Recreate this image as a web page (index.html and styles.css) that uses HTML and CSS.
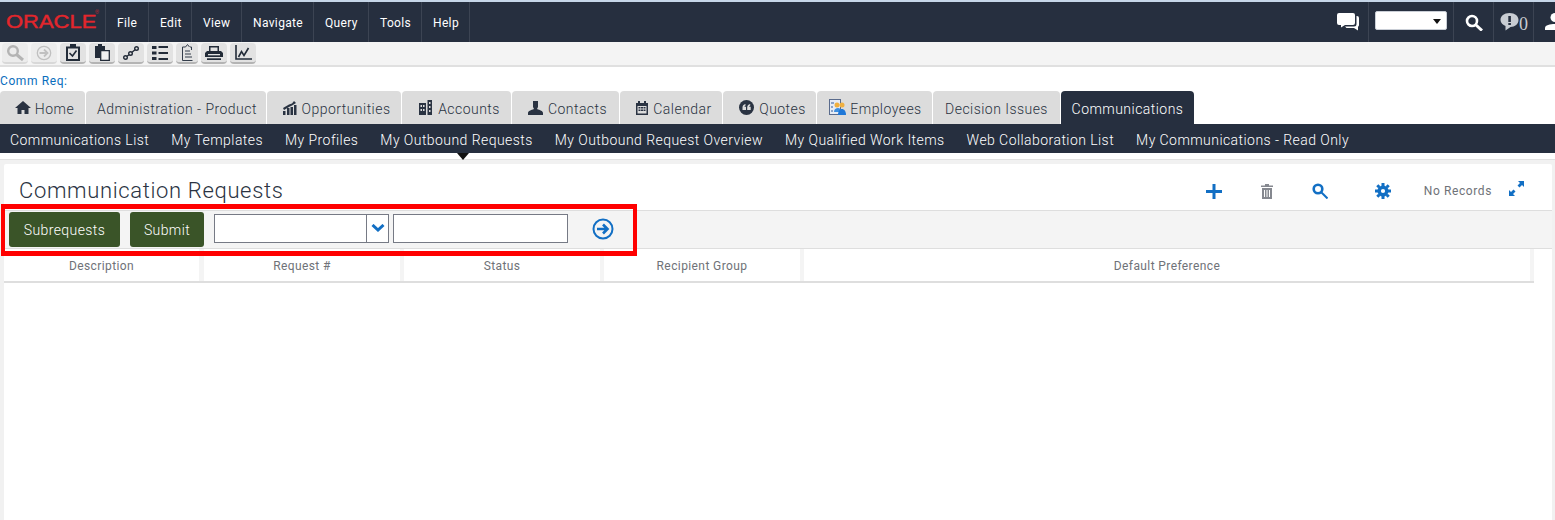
FILE: index.html
```html
<!DOCTYPE html>
<html lang="en">
<head>
<meta charset="utf-8">
<title>Communication Requests</title>
<link rel="stylesheet" href="styles.css">
</head>
<body>
<header class="topbar">
  <div class="logo"><span class="logo-text">ORACLE</span><span class="reg">®</span></div>
  <nav class="menu">
    <span class="menu-item">File</span><span class="menu-item">Edit</span><span class="menu-item">View</span><span class="menu-item">Navigate</span><span class="menu-item">Query</span><span class="menu-item">Tools</span><span class="menu-item">Help</span>
  </nav>
  <div class="top-right">
    <span class="tr-cell tr-chat"><svg width="23" height="18" viewBox="0 0 23 18"><path fill="#fff" d="M2 0h14a2 2 0 0 1 2 2v8a2 2 0 0 1-2 2H8l-4 2.500V12H2a2 2 0 0 1-2-2V2a2 2 0 0 1 2-2z"/><path fill="#fff" d="M19.500 3H20a2 2 0 0 1 2 2v7a2 2 0 0 1-1 1.800V17.500L17 15H9.500l-1.500-1.500h9a2.500 2.500 0 0 0 2.500-2.500z"/></svg></span>
    <span class="tr-cell tr-select"><span class="mini-select"><i class="caret"></i></span></span>
    <span class="tr-cell tr-search"><svg width="18" height="17" viewBox="0 0 18 17"><circle cx="7" cy="7" r="5" fill="none" stroke="#fff" stroke-width="2.600"/><path d="M11 11l6 5.500" stroke="#fff" stroke-width="3"/></svg></span>
    <span class="tr-cell tr-alert"><svg width="19" height="18" viewBox="0 0 19 18"><path fill="#c8ccd2" d="M9.500 0c5.500 0 9 3 9 7s-3.500 7-8 7l-5 3.500V13C3 12 .5 10 .5 7c0-4 3.500-7 9-7z"/><rect x="8.300" y="3" width="2.600" height="6" fill="#262f3f"/><rect x="8.300" y="10" width="2.600" height="2" fill="#262f3f"/></svg><span class="alert-count">0</span></span>
    <span class="tr-cell tr-user"><svg width="20" height="18" viewBox="0 0 20 18"><circle cx="10" cy="4.500" r="4.500" fill="#fff"/><path fill="#fff" d="M0 15c0-3 5-4 10-4s10 1 10 4v2H0z"/></svg></span>
  </div>
</header>

<div class="toolbar">
  <span class="tool disabled"><svg width="18" height="18" viewBox="0 0 18 18"><circle cx="7" cy="7" r="4.800" fill="none" stroke="#b4b4b4" stroke-width="2.400"/><path d="M10.500 10.500l6.500 5.500" stroke="#b4b4b4" stroke-width="3"/></svg></span>
  <span class="tool disabled"><svg width="16" height="16" viewBox="0 0 16 16"><circle cx="8" cy="8" r="6.700" fill="none" stroke="#c0c0c0" stroke-width="1.300"/><path d="M3.500 8h7M8 4.500L11.500 8 8 11.500" fill="none" stroke="#c0c0c0" stroke-width="1.800"/></svg></span>
  <span class="tool"><svg width="14" height="17" viewBox="0 0 14 17"><path d="M1 3.500h12v12.500H1z" fill="none" stroke="#222b38" stroke-width="2"/><rect x="4" y="0" width="6" height="4" fill="#222b38"/><path d="M3.500 9l3 3 4-5.500" fill="none" stroke="#222b38" stroke-width="1.600"/></svg></span>
  <span class="tool"><svg width="15" height="17" viewBox="0 0 15 17"><path d="M0 2h10v12H0z" fill="#222b38"/><rect x="3" y="0" width="4" height="3" fill="#222b38"/><path d="M5.700 6.700h8.600v9.600H5.700z" fill="#f0f0f0" stroke="#222b38" stroke-width="1.300"/></svg></span>
  <span class="tool"><svg width="16" height="14" viewBox="0 0 16 14"><g fill="none" stroke="#222b38" stroke-width="1.400"><circle cx="2.500" cy="11.500" r="1.800"/><circle cx="7.500" cy="7.500" r="1.800"/><circle cx="13.500" cy="2.500" r="1.800"/><path d="M4 10.200L6 8.800M9 6.200L12 3.800"/></g></svg></span>
  <span class="tool"><svg width="16" height="14" viewBox="0 0 16 14" fill="#222b38"><rect width="4.500" height="3"/><rect x="6.500" width="9.500" height="2"/><rect y="5.500" width="4.500" height="3"/><rect x="6.500" y="6" width="9.500" height="2"/><rect y="11" width="4.500" height="3"/><rect x="6.500" y="12" width="9.500" height="2"/></svg></span>
  <span class="tool tool-narrow"><svg width="11" height="17" viewBox="0 0 11 17" fill="none" stroke="#333c4a"><path d="M.5 16.500V3h3M.5 16.500h10"/><path d="M3.500 3l2-2.500 2 2.500"/><path d="M8 3h1.500v3M3 7h5M3 10h6M3 13h7"/></svg></span>
  <span class="tool"><svg width="18" height="14" viewBox="0 0 18 14" fill="#222b38"><path d="M4 0h10v1.500H5.500V5h-1.500zM12.500 0H14v5h-1.500z"/><path d="M2 5h14l2 2v4H0V7z"/><rect x="3" y="8" width="12" height="1.300" fill="#e4e4e4"/><rect x="2" y="12.300" width="14" height="1.700"/></svg></span>
  <span class="tool"><svg width="17" height="15" viewBox="0 0 17 15" fill="none" stroke="#222b38" stroke-width="1.600"><path d="M1 0v14h16"/><path d="M3.500 12l3-5.500 2.500 4L13.500 3"/></svg></span>
</div>

<div class="context"><a class="context-link">Comm Req:</a></div>

<nav class="tabs">
  <span class="tab tab-home"><svg class="tab-icon" width="16" height="13" viewBox="0 0 16 13" fill="#2a3342"><path d="M8 0L0 7h2.500v6h4V9h3v4h4V7H16z"/></svg>Home</span>
  <span class="tab tab-admin">Administration - Product</span>
  <span class="tab tab-opp"><svg class="tab-icon" width="14" height="14" viewBox="0 0 14 14" fill="#2a3342"><rect y="10" width="2.500" height="4"/><rect x="4" y="7" width="2.500" height="7"/><rect x="7.500" y="6" width="2.500" height="8"/><rect x="11" y="4" width="2.500" height="10"/><path d="M0 7l6-3.500 3-1L11 0l2 2-4 2.500-3 1.500-5 3z"/></svg>Opportunities</span>
  <span class="tab tab-acc"><svg class="tab-icon" width="13" height="15" viewBox="0 0 13 15" fill="#2a3342"><path d="M0 3h7v12H0zM8.500 0H13v15H8.500z"/><g fill="#dcdcdc"><rect x="1.500" y="5" width="1.500" height="2"/><rect x="4" y="5" width="1.500" height="2"/><rect x="1.500" y="9" width="1.500" height="2"/><rect x="4" y="9" width="1.500" height="2"/><rect x="10" y="2" width="1.500" height="2"/><rect x="10" y="6" width="1.500" height="2"/><rect x="10" y="10" width="1.500" height="2"/></g></svg>Accounts</span>
  <span class="tab tab-con"><svg class="tab-icon" width="15" height="14" viewBox="0 0 15 14" fill="#2a3342"><path d="M5 0h5v6l-1 2c3 1 6 2 6 4v2H0v-2c0-2 3-3 6-4L5 6z"/></svg>Contacts</span>
  <span class="tab tab-cal"><svg class="tab-icon" width="12" height="14" viewBox="0 0 12 14"><path fill="#2a3342" d="M0 2h2V0h2v2h4V0h2v2h2v12H0z"/><rect x="1.500" y="5" width="9" height="7.500" fill="#dcdcdc"/><g fill="#2a3342"><rect x="2.500" y="6" width="2" height="1.500"/><rect x="5" y="6" width="2" height="1.500"/><rect x="7.500" y="6" width="2" height="1.500"/><rect x="2.500" y="8.500" width="2" height="1.500"/><rect x="5" y="8.500" width="2" height="1.500"/><rect x="7.500" y="8.500" width="2" height="1.500"/></g></svg>Calendar</span>
  <span class="tab tab-quo"><svg class="tab-icon" width="15" height="15" viewBox="0 0 15 15"><circle cx="7.500" cy="7.500" r="7.500" fill="#2a3342"/><path fill="#dcdcdc" d="M3.500 10V7.500c0-2 1-3 3-3.500v1.500c-.7.300-1 .7-1 1.200H7V10zM8.200 10V7.500c0-2 1-3 3-3.500v1.500c-.7.300-1 .7-1 1.200h1.500V10z"/></svg>Quotes</span>
  <span class="tab tab-emp"><svg class="tab-icon" width="17" height="17" viewBox="0 0 17 17"><rect x=".5" y=".5" width="11" height="15" fill="#e6ecf5" stroke="#5a6b8c"/><path d="M2 3h3v2H2zM2 7h2v2H2zM2 11h2v2H2z" fill="#8aa3c8"/><circle cx="8" cy="6" r="2.500" fill="#f0b040"/><circle cx="13" cy="6" r="2.500" fill="#f0b040"/><path d="M5 13c0-3 2-4 4-4s3 1 3 4z" fill="#3d8fe0"/><path d="M9 16c0-4 2-6 4-6s4 2 4 6z" fill="#1f78d8"/></svg>Employees</span>
  <span class="tab tab-dec">Decision Issues</span>
  <span class="tab tab-active">Communications</span>
</nav>

<nav class="subnav">
  <span class="sub-item">Communications List</span><span class="sub-item">My Templates</span><span class="sub-item">My Profiles</span><span class="sub-item sub-current">My Outbound Requests</span><span class="sub-item">My Outbound Request Overview</span><span class="sub-item">My Qualified Work Items</span><span class="sub-item">Web Collaboration List</span><span class="sub-item">My Communications - Read Only</span>
</nav>

<main class="content">
  <section class="panel">
    <div class="panel-head">
      <h1 class="panel-title">Communication Requests</h1>
      <div class="panel-actions">
        <svg class="act act-add" width="16" height="15" viewBox="0 0 16 15"><path fill="#126fc4" d="M6.500 0h3v6H16v3H9.500v6h-3V9H0V6h6.500z"/></svg>
        <svg class="act act-del" width="12" height="15" viewBox="0 0 12 15" fill="#85888f"><path d="M4 0h4v1.500h4V3H0V1.500h4z"/><path d="M1 4h10v11H1zM3 6v7h1V6zm2.500 0v7h1V6zM8 6v7h1V6z" fill-rule="evenodd"/></svg>
        <svg class="act act-find" width="16" height="16" viewBox="0 0 16 16"><circle cx="6" cy="6" r="4.300" fill="none" stroke="#126fc4" stroke-width="2.600"/><path d="M9.500 9.500l6 6" stroke="#126fc4" stroke-width="2"/></svg>
        <svg class="act act-gear" width="16" height="16" viewBox="0 0 16 16"><circle cx="8" cy="8" r="3.800" fill="none" stroke="#126fc4" stroke-width="3.400"/><g stroke="#126fc4" stroke-width="3"><path d="M8 0v3M8 13v3M0 8h3M13 8h3M2.300 2.300l2 2M11.700 11.700l2 2M13.700 2.300l-2 2M4.300 11.700l-2 2"/></g></svg>
        <span class="records">No Records</span>
        <svg class="act act-expand" width="15" height="15" viewBox="0 0 15 15" fill="#126fc4"><path d="M9 0h6v6l-2-2-2.500 2.500-2-2L11 2zM0 9l2 2 2.500-2.500 2 2L4 13l2 2H0z"/></svg>
      </div>
    </div>
    <div class="actions-row">
      <button class="btn btn-sub">Subrequests</button>
      <button class="btn btn-submit">Submit</button>
      <span class="combo"><span class="combo-field"></span><span class="combo-arrow"><svg width="14" height="8" viewBox="0 0 14 8"><path d="M1.500 1L7 6l5.500-5" fill="none" stroke="#126fc4" stroke-width="3"/></svg></span></span>
      <span class="text-field"></span>
      <svg class="go" width="22" height="22" viewBox="0 0 22 22"><circle cx="11" cy="11" r="9.500" fill="none" stroke="#126fc4" stroke-width="2"/><path d="M5 11h10M11 6.500l4.500 4.500-4.500 4.500" fill="none" stroke="#126fc4" stroke-width="2.600"/></svg>
    </div>
    <div class="grid-head">
      <span class="col col-desc">Description</span>
      <span class="col col-req">Request #</span>
      <span class="col col-status">Status</span>
      <span class="col col-group">Recipient Group</span>
      <span class="col col-pref">Default Preference</span>
    </div>
  </section>
</main>
<div class="highlight"></div>
</body>
</html>
```

FILE: styles.css
```css
* { box-sizing: border-box; }
html, body { margin: 0; padding: 0; }
body {
  width: 1555px;
  height: 520px;
  overflow: hidden;
  position: relative;
  background: #fff;
  font-family: Roboto, "Liberation Sans", sans-serif;
  font-size: 14px;
  font-weight: 300;
  color: #333;
}

.topbar {
  height: 42px;
  border-top: 2px solid #c6d6e8;
  background: #262f3f;
  display: flex;
  color: #fff;
}
.logo {
  width: 106px;
  flex: none;
  padding: 9px 0 0 6px;
  border-right: 1px solid #3c4453;
  line-height: 22px;
  white-space: nowrap;
  position: relative;
}
.logo-text {
  display: inline-block;
  color: #e3262c;
  font-family: "Liberation Sans", sans-serif;
  font-size: 18px;
  font-weight: 400;
  -webkit-text-stroke: .4px #e3262c;
  transform: scaleX(1.220);
  transform-origin: 0 50%;
}
.reg {
  position: absolute;
  left: 95px;
  top: 6px;
  font-size: 5px;
  line-height: 8px;
  color: #e3262c;
}
.menu { display: flex; }
.menu-item {
  display: flex;
  align-items: center;
  padding: 2px 11px 0;
  border-right: 1px solid #3c4453;
  font-size: 12px;
  font-weight: 400;
  letter-spacing: .35px;
  height: 40px;
}
.menu-item:nth-child(1) { width: 43px; }
.menu-item:nth-child(2) { width: 43px; }
.menu-item:nth-child(3) { width: 50px; }
.menu-item:nth-child(4) { width: 72px; }
.menu-item:nth-child(5) { width: 55px; }
.menu-item:nth-child(6) { width: 53px; }
.menu-item:nth-child(7) { width: 48px; }
.top-right { margin-left: auto; display: flex; height: 40px; }
.tr-cell {
  display: flex;
  align-items: center;
  border-left: 1px solid #3c4453;
}
.tr-cell svg { flex: none; }
.tr-chat { border-left: 0; width: 31px; }
.tr-select { width: 85px; padding-left: 6px; border-left: 1px solid #3c4453; }
.tr-search { width: 40px; padding-left: 11px; }
.tr-alert { width: 40px; padding-left: 6px; }
.tr-user { width: 22px; padding-left: 11px; overflow: hidden; }
.mini-select {
  width: 72px;
  height: 19px;
  background: #fff;
  border: 1px solid #c9ced6;
  border-radius: 2px;
  position: relative;
  margin-top: -3px;
}
.caret {
  position: absolute;
  right: 5px;
  top: 7px;
  border-left: 4px solid transparent;
  border-right: 4px solid transparent;
  border-top: 5px solid #111;
}
.alert-count {
  font-family: "Liberation Serif", serif;
  font-size: 18px;
  font-weight: 400;
  color: #c8ccd2;
  margin: 5px 0 0 0;
}

.toolbar {
  height: 25px;
  background: #f4f4f4;
  border-bottom: 2px solid #e0e0e0;
  display: flex;
  padding: 1px 0 0 2px;
  gap: 3px;
}
.tool {
  width: 26px;
  height: 21px;
  background: #e2e2e2;
  border-radius: 4px;
  border-bottom: 2px solid #b4b4b4;
  display: flex;
  align-items: center;
  justify-content: center;
  flex: none;
}
.tool.disabled { background: #ececec; border-bottom-color: #d8d8d8; }
.tool-narrow { width: 22px; }

.context { height: 24px; padding: 7px 0 0 0; }
.context-link { color: #0a6ebd; font-size: 12px; font-weight: 400; letter-spacing: .6px; line-height: 14px; display: block; }

.tabs { display: flex; height: 33px; gap: 1px; background: #fff; }
.tab {
  display: flex;
  align-items: center;
  justify-content: center;
  height: 33px;
  background: #dcdcdc;
  border-radius: 4px 4px 0 0;
  color: #2a3342;
  font-size: 14px;
  letter-spacing: .46px;
  padding-top: 3px;
  white-space: nowrap;
}
.tab-icon { margin-right: 5px; flex: none; margin-top: -3px; }
.tab-home { width: 85px; padding-left: 4px; }
.tab-home .tab-icon { margin-right: 4px; }
.tab-admin { width: 180px; padding-left: 2px; }
.tab-opp { width: 134px; padding-left: 5px; }
.tab-acc { width: 109px; padding-left: 6px; }
.tab-acc .tab-icon { margin-right: 6px; }
.tab-con { width: 107px; padding-left: 4px; }
.tab-cal { width: 102px; padding-left: 6px; }
.tab-quo { width: 93px; padding-left: 6px; }
.tab-emp { width: 115px; padding-left: 2px; }
.tab-emp .tab-icon { margin-right: 4px; }
.tab-dec { width: 127px; }
.tab-active { width: 133px; background: #262f3f; color: #fff; }

.subnav {
  height: 29px;
  background: #262f3f;
  display: flex;
  align-items: center;
  padding: 2px 0 0 10px;
  color: #fff;
  gap: 22px;
  position: relative;
}
.sub-item { font-size: 14px; letter-spacing: .44px; white-space: nowrap; position: relative; }
.sub-current::after {
  content: "";
  position: absolute;
  left: 77px;
  top: 21px;
  border-left: 6px solid transparent;
  border-right: 6px solid transparent;
  border-top: 7px solid #111;
}

.content {
  height: 367px;
  margin-top: 6px;
  border-top: 1px solid #e2e2e2;
  background: #f1f1f1;
  padding: 4px 0 0 4px;
}
.panel {
  width: 1548px;
  height: 356px;
  background: #fff;
  border-radius: 2px 2px 0 0;
}
.panel-head {
  height: 47px;
  border-bottom: 1px solid #dedede;
  display: flex;
  align-items: flex-start;
  justify-content: space-between;
}
.panel-title {
  margin: 13px 0 0 15px;
  font-size: 22px;
  font-weight: 300;
  line-height: 28px;
  letter-spacing: .65px;
  color: #2a3342;
}
.panel-actions { display: flex; align-items: center; height: 46px; padding-top: 8px; }
.act { flex: none; }
.act-add { margin-right: 39px; }
.act-del { margin-right: 39px; }
.act-find { margin-right: 47px; }
.act-gear { margin-right: 33px; }
.records { font-size: 12px; font-weight: 400; letter-spacing: .6px; color: #6f7278; margin-right: 17px; margin-top: -1px; }
.act-expand { margin-right: 28px; margin-top: -5px; }

.actions-row {
  height: 38px;
  background: #f4f4f4;
  border-bottom: 1px solid #dedede;
  display: flex;
  align-items: center;
  padding: 0 0 0 5px;
}
.btn {
  height: 35px;
  border: 0;
  border-radius: 3px;
  background: #3a5428;
  color: #fff;
  font-family: inherit;
  font-size: 14px;
  font-weight: 300;
  letter-spacing: .4px;
  padding: 0;
}
.btn-sub { width: 111px; margin-right: 10px; }
.btn-submit { width: 74px; margin-right: 10px; }
.combo { display: flex; width: 175px; height: 29px; border: 1px solid #767a85; background: #fff; margin: 0 4px 2px 0; }
.combo-field { flex: 1; }
.combo-arrow { width: 22px; border-left: 1px solid #767a85; display: flex; align-items: center; justify-content: center; padding-bottom: 2px; }
.text-field { width: 175px; height: 29px; border: 1px solid #767a85; background: #fff; margin: 0 24px 2px 0; }
.go { flex: none; margin-bottom: 1px; }

.grid-head {
  display: flex;
  width: 1530px;
  height: 34px;
  border-bottom: 2px solid #dedede;
  background: #f4f4f4;
  gap: 4px;
  padding-right: 4px;
}
.col {
  background: #fff;
  display: flex;
  align-items: center;
  justify-content: center;
  padding-top: 2px;
  font-size: 12px;
  font-weight: 400;
  letter-spacing: .4px;
  color: #6f7278;
}
.col-desc { width: 195px; margin-right: 1px; }
.col-req { width: 196px; }
.col-status { width: 196px; }
.col-group { width: 196px; }
.col-pref { flex: 1; }

.highlight {
  position: absolute;
  left: 1px;
  top: 204px;
  width: 636px;
  height: 52px;
  border-style: solid;
  border-color: #f00;
  border-width: 5px 4px;
  pointer-events: none;
}
```
